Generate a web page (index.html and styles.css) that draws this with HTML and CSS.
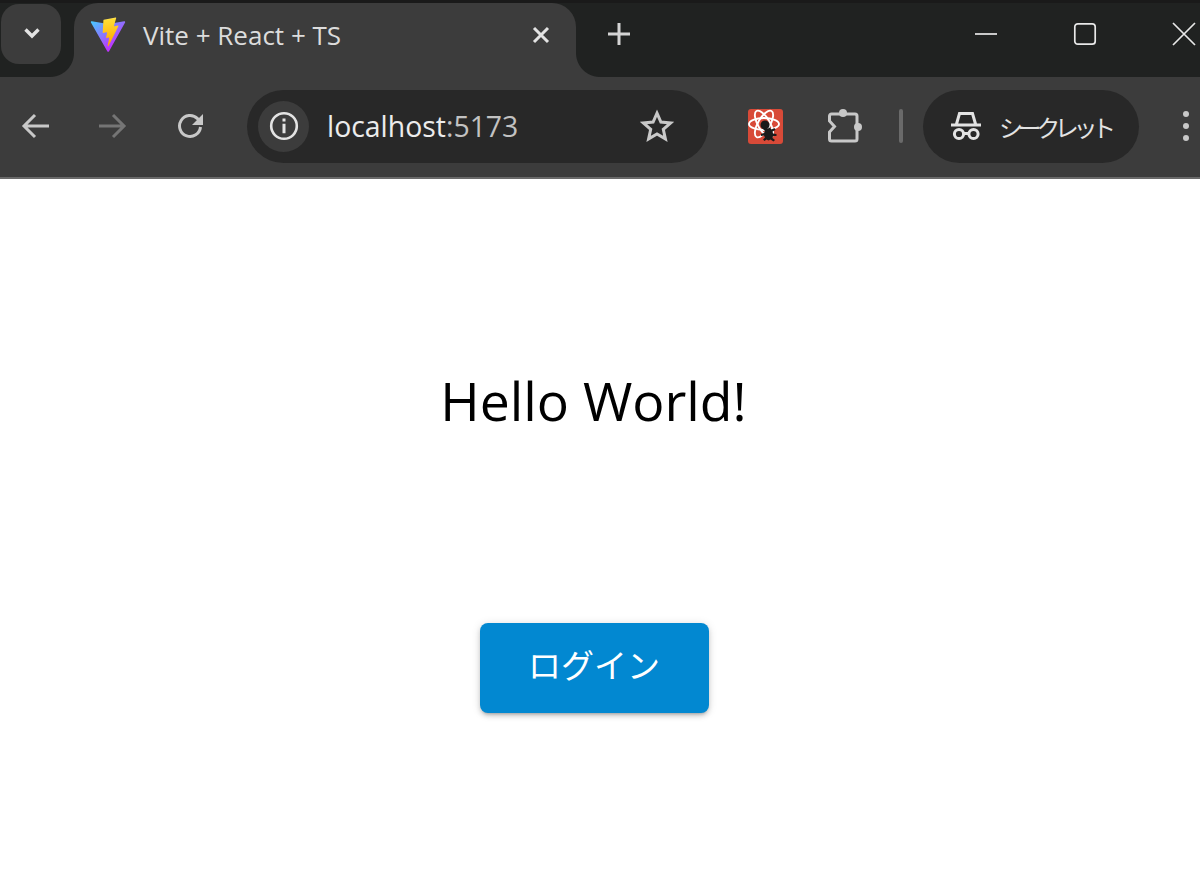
FILE: index.html
```html
<!DOCTYPE html>
<html lang="ja">
<head>
<meta charset="utf-8">
<title>Vite + React + TS</title>
<link rel="stylesheet" href="styles.css">
</head>
<body>
<header class="chrome">
  <div class="tabstrip">
    <button class="tab-search" aria-label="タブを検索">
      <svg width="18" height="12" viewBox="0 0 18 12"><path d="M2.5 2.5 9 9l6.5-6.5" fill="none" stroke="#e3e3e3" stroke-width="3.4"/></svg>
    </button>
    <div class="tab">
      <svg class="favicon" width="36" height="36" viewBox="0 0 410 404">
        <defs>
          <linearGradient id="va" x1="6" y1="33" x2="235" y2="344" gradientUnits="userSpaceOnUse"><stop offset="0" stop-color="#41D1FF"/><stop offset="1" stop-color="#BD34FE"/></linearGradient>
          <linearGradient id="vb" x1="194" y1="8" x2="236" y2="293" gradientUnits="userSpaceOnUse"><stop offset="0" stop-color="#FFEA83"/><stop offset=".08" stop-color="#FFDD35"/><stop offset="1" stop-color="#FFA800"/></linearGradient>
        </defs>
        <path fill="url(#va)" d="M399.641 59.525 215.643 388.545c-3.799 6.793-13.559 6.833-17.415.073L10.582 59.556C6.38 52.19 12.68 43.267 21.028 44.759l184.195 32.923c1.175.21 2.378.208 3.553-.006l180.343-32.87c8.32-1.517 14.649 7.337 10.522 14.719Z"/>
        <path fill="url(#vb)" d="M292.965 1.574 156.801 28.255c-2.238.439-3.895 2.335-4.03 4.611l-8.376 141.464c-.197 3.332 2.863 5.918 6.115 5.168l37.91-8.749c3.547-.818 6.752 2.306 6.023 5.873l-11.263 55.153c-.758 3.712 2.727 6.886 6.352 5.785l23.415-7.114c3.63-1.102 7.118 2.081 6.35 5.796l-17.899 86.633c-1.12 5.419 6.088 8.374 9.094 3.728l2.008-3.103 110.954-221.428c1.858-3.707-1.346-7.935-5.418-7.15l-39.022 7.532c-3.667.707-6.787-2.708-5.752-6.296l25.469-88.291c1.036-3.594-2.095-7.012-5.766-6.293Z"/>
      </svg>
      <span class="tab-title">Vite + React + TS</span>
      <svg class="tab-close" width="20" height="20" viewBox="0 0 20 20"><path d="M3 3l14 14M17 3 3 17" stroke="#e3e3e3" stroke-width="3"/></svg>
    </div>
    <svg class="new-tab" width="24" height="24" viewBox="0 0 24 24"><path d="M12 1v22M1 12h22" stroke="#d4d4d4" stroke-width="3"/></svg>
    <div class="window-controls">
      <svg width="24" height="24" viewBox="0 0 24 24"><path d="M1 12h22" stroke="#e8e8e8" stroke-width="1.7"/></svg>
      <svg width="24" height="24" viewBox="0 0 24 24"><rect x="1.8" y="1.8" width="20.4" height="20.4" rx="3" fill="none" stroke="#e8e8e8" stroke-width="1.7"/></svg>
      <svg width="24" height="24" viewBox="0 0 24 24"><path d="M1 1l22 22M23 1 1 23" stroke="#e8e8e8" stroke-width="1.7"/></svg>
    </div>
  </div>
  <div class="toolbar">
    <div class="nav-slot">
      <svg width="28" height="26" viewBox="0 0 28 26"><path d="M14 2 3 13l11 11M3 13h25" fill="none" stroke="#c8c8c8" stroke-width="3"/></svg>
    </div>
    <div class="nav-slot">
      <svg width="28" height="26" viewBox="0 0 28 26"><path d="M14 2l11 11-11 11M25 13H0" fill="none" stroke="#757575" stroke-width="3"/></svg>
    </div>
    <div class="nav-slot">
      <svg width="28" height="28" viewBox="0 0 28 28"><path d="M23.5 15a10.5 10.5 0 1 1-3-8.400L24 10" fill="none" stroke="#c8c8c8" stroke-width="3"/><path d="M26 2v11H15z" fill="#c8c8c8"/></svg>
    </div>
    <div class="omnibox">
      <div class="site-info">
        <svg width="30" height="30" viewBox="0 0 30 30"><circle cx="15" cy="15" r="12.8" fill="none" stroke="#e3e3e3" stroke-width="2.6"/><path d="M13.5 7.5h3v3h-3zM13.5 12.8h3v9.5h-3z" fill="#e3e3e3"/></svg>
      </div>
      <span class="url"><span class="url-host">localhost</span>:5173</span>
      <svg class="star" width="34" height="34" viewBox="0 0 34 34"><path d="M17 4.200l3.900 8.900 9.700.9-7.300 6.400 2.100 9.500-8.400-5-8.400 5 2.100-9.500L3.400 14l9.700-.9z" fill="none" stroke="#c8c8c8" stroke-width="3"/></svg>
    </div>
    <svg class="ext-icon" width="35" height="35" viewBox="0 0 35 35">
      <rect width="35" height="35" rx="3" fill="#d84a38"/>
      <g fill="none" stroke="#fff" stroke-width="1.9">
        <ellipse cx="16" cy="15" rx="15" ry="6"/>
        <ellipse cx="16" cy="15" rx="15" ry="6" transform="rotate(60 16 15)"/>
        <ellipse cx="16" cy="15" rx="15" ry="6" transform="rotate(120 16 15)"/>
      </g>
      <circle cx="17" cy="16" r="4.500" fill="#1b1b1b"/>
      <path d="M20 19.500l2-1 1.500 2 3-1.500 1 2-3 1.500.5 2 3.500.5v2l-3.500 0-.5 2 2.500 2-1.500 1.500-3-2-2 1-2-1-2 1.500-1.500-1.500 2-2-1-2-3 .5v-2l3-1 1-2-2-2 1.500-1.500 2 1.500z" fill="#1b1b1b"/>
    </svg>
    <svg class="puzzle" width="36" height="36" viewBox="0 0 36 36"><path d="M4.500 6H28a2 2 0 0 1 2 2v23a2 2 0 0 1-2 2H4.500a2 2 0 0 1-2-2v-7l5-5.500-5-5.500V8a2 2 0 0 1 2-2z" fill="none" stroke="#c8c8c8" stroke-width="3"/><circle cx="16" cy="5" r="4" fill="#c8c8c8"/><circle cx="31" cy="19" r="4" fill="#c8c8c8"/></svg>
    <div class="divider"></div>
    <div class="incognito">
      <svg width="32" height="30" viewBox="0 0 32 30"><path d="M1 14h30M6.500 13 9.500 2.500h13L25.500 13" fill="none" stroke="#e3e3e3" stroke-width="3"/><circle cx="9" cy="23" r="4.600" fill="none" stroke="#e3e3e3" stroke-width="3"/><circle cx="23.500" cy="23" r="4.600" fill="none" stroke="#e3e3e3" stroke-width="3"/><path d="M13 22.500h6" stroke="#e3e3e3" stroke-width="3"/></svg>
      <span class="incognito-label">シークレット</span>
    </div>
    <div class="kebab"><i></i><i></i><i></i></div>
  </div>
</header>
<main class="page">
  <h1 class="hello">Hello World!</h1>
  <button class="login"><span class="login-label">ログイン</span></button>
</main>
</body>
</html>
```

FILE: styles.css
```css
* { box-sizing: border-box; }
html, body { margin: 0; height: 100%; }
body {
  background: #fff;
  overflow: hidden;
  font-family: "Open Sans", "Noto Sans", "Noto Sans CJK JP", sans-serif;
}
svg { display: block; flex: none; }

.chrome { display: flex; flex-direction: column; }

.tabstrip {
  height: 77px;
  display: flex;
  align-items: flex-start;
  background: #202221;
  border-top: 3px solid #1a1a1a;
}
.tab-search {
  width: 60px;
  height: 60px;
  margin: 1px 0 0 1px;
  padding: 0 0 2px 2px;
  border: 0;
  border-radius: 18px;
  background: #3c3c3c;
  display: flex;
  align-items: center;
  justify-content: center;
}
.tab {
  position: relative;
  width: 502px;
  height: 74px;
  margin-left: 13px;
  padding: 0 24px 10px 16px;
  display: flex;
  align-items: center;
  background: #3c3c3c;
  border-radius: 24px 24px 0 0;
}
.tab::before, .tab::after {
  content: "";
  position: absolute;
  bottom: 0;
  width: 24px;
  height: 24px;
}
.tab::before {
  left: -24px;
  background: radial-gradient(circle at 0 0, transparent 23.5px, #3c3c3c 24.5px);
}
.tab::after {
  right: -24px;
  background: radial-gradient(circle at 100% 0, transparent 23.5px, #3c3c3c 24.5px);
}
.favicon { margin-right: 17px; }
.tab-title {
  flex: 1;
  color: #dcdcdc;
  font-size: 26px;
  white-space: nowrap;
}
.tab-close { margin-right: 1px; }
.new-tab { margin: 19px 0 0 31px; }
.window-controls {
  margin: 19px 4px 0 auto;
  display: flex;
  gap: 75px;
}

.toolbar {
  height: 102px;
  display: flex;
  align-items: center;
  padding-bottom: 2px;
  background: #3c3c3c;
  border-bottom: 2px solid #6a6a6a;
}
.toolbar > * { flex: none; }
.nav-slot {
  width: 70px;
  margin-right: 8px;
  display: flex;
  justify-content: center;
}
.nav-slot:nth-child(3) { margin-right: 21px; }
.omnibox {
  width: 461px;
  height: 73px;
  padding: 0 34px 0 11px;
  display: flex;
  align-items: center;
  border-radius: 37px;
  background: #282828;
}
.site-info {
  width: 51px;
  height: 51px;
  border-radius: 50%;
  background: #3c3c3c;
  display: flex;
  align-items: center;
  justify-content: center;
}
.url {
  flex: 1;
  margin-left: 18px;
  color: #c2c2c2;
  font-size: 28.4px;
}
.url-host { color: #ececec; }
.ext-icon { margin-left: 40px; }
.puzzle { margin-left: 44px; }
.divider {
  width: 4px;
  height: 34px;
  margin-left: 36px;
  border-radius: 2px;
  background: #6a6a6a;
}
.incognito {
  width: 216px;
  height: 73px;
  margin-left: 20px;
  padding-left: 27px;
  display: flex;
  align-items: center;
  border-radius: 37px;
  background: #282828;
}
.incognito-label {
  margin-left: 17px;
  color: #e3e3e3;
  font-size: 24px;
  font-family: "Noto Sans CJK JP", sans-serif;
  letter-spacing: -5.4px;
  white-space: nowrap;
}
.kebab {
  width: 28px;
  margin-left: 33px;
  display: flex;
  flex-direction: column;
  align-items: center;
  gap: 5.5px;
}
.kebab i {
  width: 6.5px;
  height: 6.5px;
  border-radius: 50%;
  background: #c8c8c8;
}

.page {
  height: 713px;
  padding-right: 12px;
  display: flex;
  flex-direction: column;
  align-items: center;
}
.hello {
  margin: 184px 1px 0 0;
  color: #000;
  font-size: 53.5px;
  font-weight: 400;
  line-height: 76px;
  white-space: nowrap;
}
.login {
  width: 229px;
  height: 90px;
  margin-top: 184px;
  padding: 0 0 8px;
  border: 0;
  border-radius: 8px;
  background: #0288d1;
  color: #fff;
  font-family: "Noto Sans CJK JP", sans-serif;
  font-size: 33px;
  font-weight: 400;
  box-shadow: 0 3px 3px -2px rgba(0,0,0,.2), 0 3px 5px 0 rgba(0,0,0,.14), 0 1px 10px 0 rgba(0,0,0,.12);
}
.login-label { display: block; }
```
